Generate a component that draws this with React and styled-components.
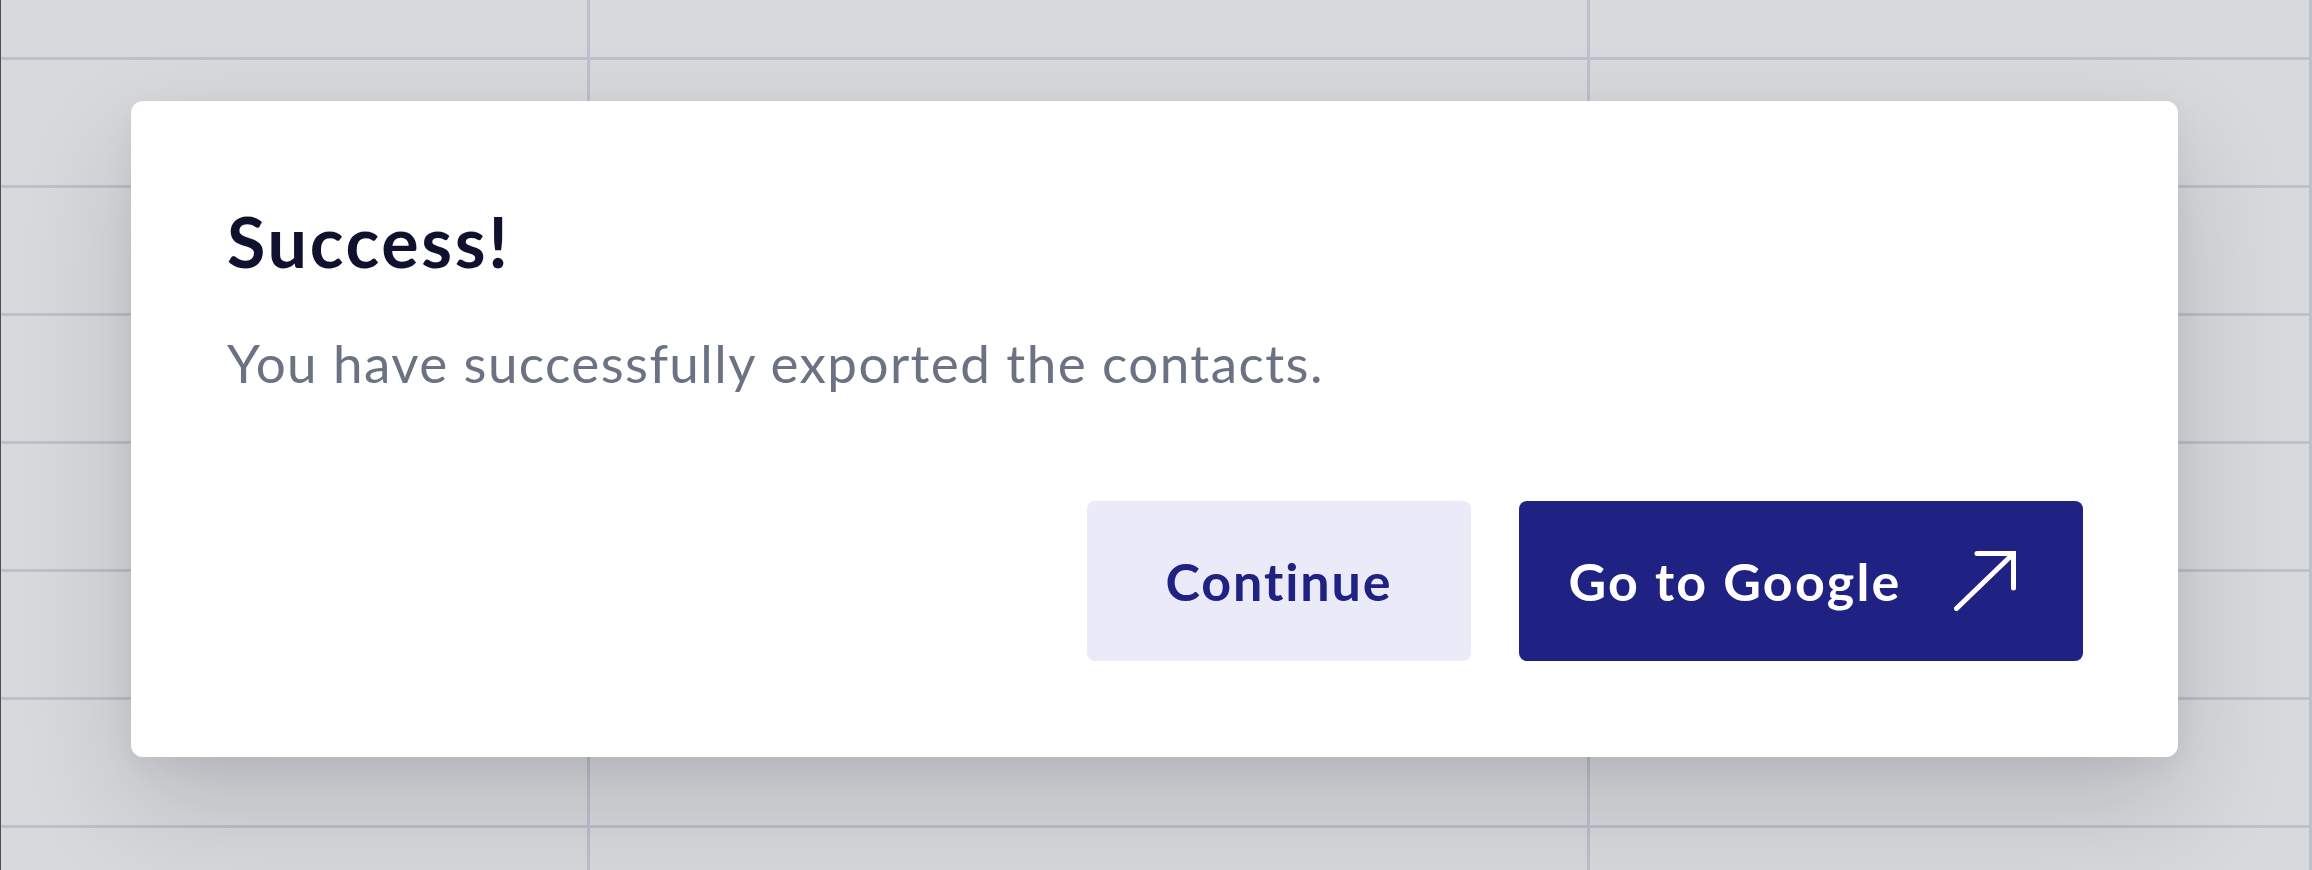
import React from "react";
import styled, { createGlobalStyle } from "styled-components";

const Global = createGlobalStyle`
  html, body { margin: 0; padding: 0; background: #d8d9dc; }
  * { box-sizing: border-box; }
`;

const Page = styled.div`
  position: relative;
  width: 2312px;
  height: 870px;
  overflow: hidden;
  background: #d8d9dc;
  font-family: Lato, "Open Sans", sans-serif;
`;

const Sheet = styled.div`
  display: grid;
  grid-template-columns: 589px 1000px 1fr;
  grid-auto-rows: 128px;
  margin-top: -68px;
  border-left: 1px solid #4e4f52;
`;

const Cell = styled.div`
  border-right: 3px solid #bbc0cc;
  border-bottom: 3px solid #bbc0cc;
`;

const Dialog = styled.div`
  position: absolute;
  left: 131px;
  top: 101px;
  width: 2047px;
  height: 656px;
  padding: 98px 95px 96px 96px;
  background: #ffffff;
  border-radius: 12px;
  box-shadow: 0 48px 110px rgba(20, 22, 40, 0.16), 0 10px 30px rgba(20, 22, 40, 0.05);
  display: flex;
  flex-direction: column;
`;

const Title = styled.h2`
  margin: 0;
  font-family: Lato, sans-serif;
  font-weight: 700;
  font-size: 70px;
  line-height: 84px;
  color: #10112e;
  letter-spacing: 2.7px;
`;

const Message = styled.p`
  margin: 48px 0 0;
  font-family: Lato, sans-serif;
  font-weight: 400;
  font-size: 53px;
  line-height: 64px;
  color: #6b7284;
  letter-spacing: 1.4px;
`;

const Actions = styled.div`
  margin-top: auto;
  display: flex;
  justify-content: flex-end;
  gap: 48px;
`;

const Button = styled.button`
  height: 160px;
  width: ${(p) => p.$width}px;
  border: none;
  border-radius: 8px;
  display: flex;
  align-items: center;
  justify-content: center;
  gap: 52px;
  padding: ${(p) => (p.$primary ? "0 18px 0 0" : "0")};
  font-family: Lato, sans-serif;
  font-weight: 700;
  font-size: 52px;
  letter-spacing: ${(p) => (p.$primary ? "2.2px" : "1.9px")};
  background: ${(p) => (p.$primary ? "#1f2283" : "#eaeaf8")};
  color: ${(p) => (p.$primary ? "#ffffff" : "#1f2283")};
  cursor: pointer;
`;

const Arrow = () => (
  <svg width="62" height="60" viewBox="0 0 62 60" fill="none">
    <path d="M2.5 57.5 L59.5 2.5" stroke="#ffffff" strokeWidth="5" strokeLinecap="round" />
    <path d="M23 2.5 H59.5 V37" stroke="#ffffff" strokeWidth="5" strokeLinecap="round" strokeLinejoin="miter" />
  </svg>
);

export default function App() {
  const cells = Array.from({ length: 24 });
  return (
    <Page>
      <Global />
      <Sheet>
        {cells.map((_, i) => (
          <Cell key={i} />
        ))}
      </Sheet>
      <Dialog role="dialog">
        <Title>Success!</Title>
        <Message>You have successfully exported the contacts.</Message>
        <Actions>
          <Button $width={384}>Continue</Button>
          <Button $width={564} $primary>
            Go to Google
            <Arrow />
          </Button>
        </Actions>
      </Dialog>
    </Page>
  );
}
